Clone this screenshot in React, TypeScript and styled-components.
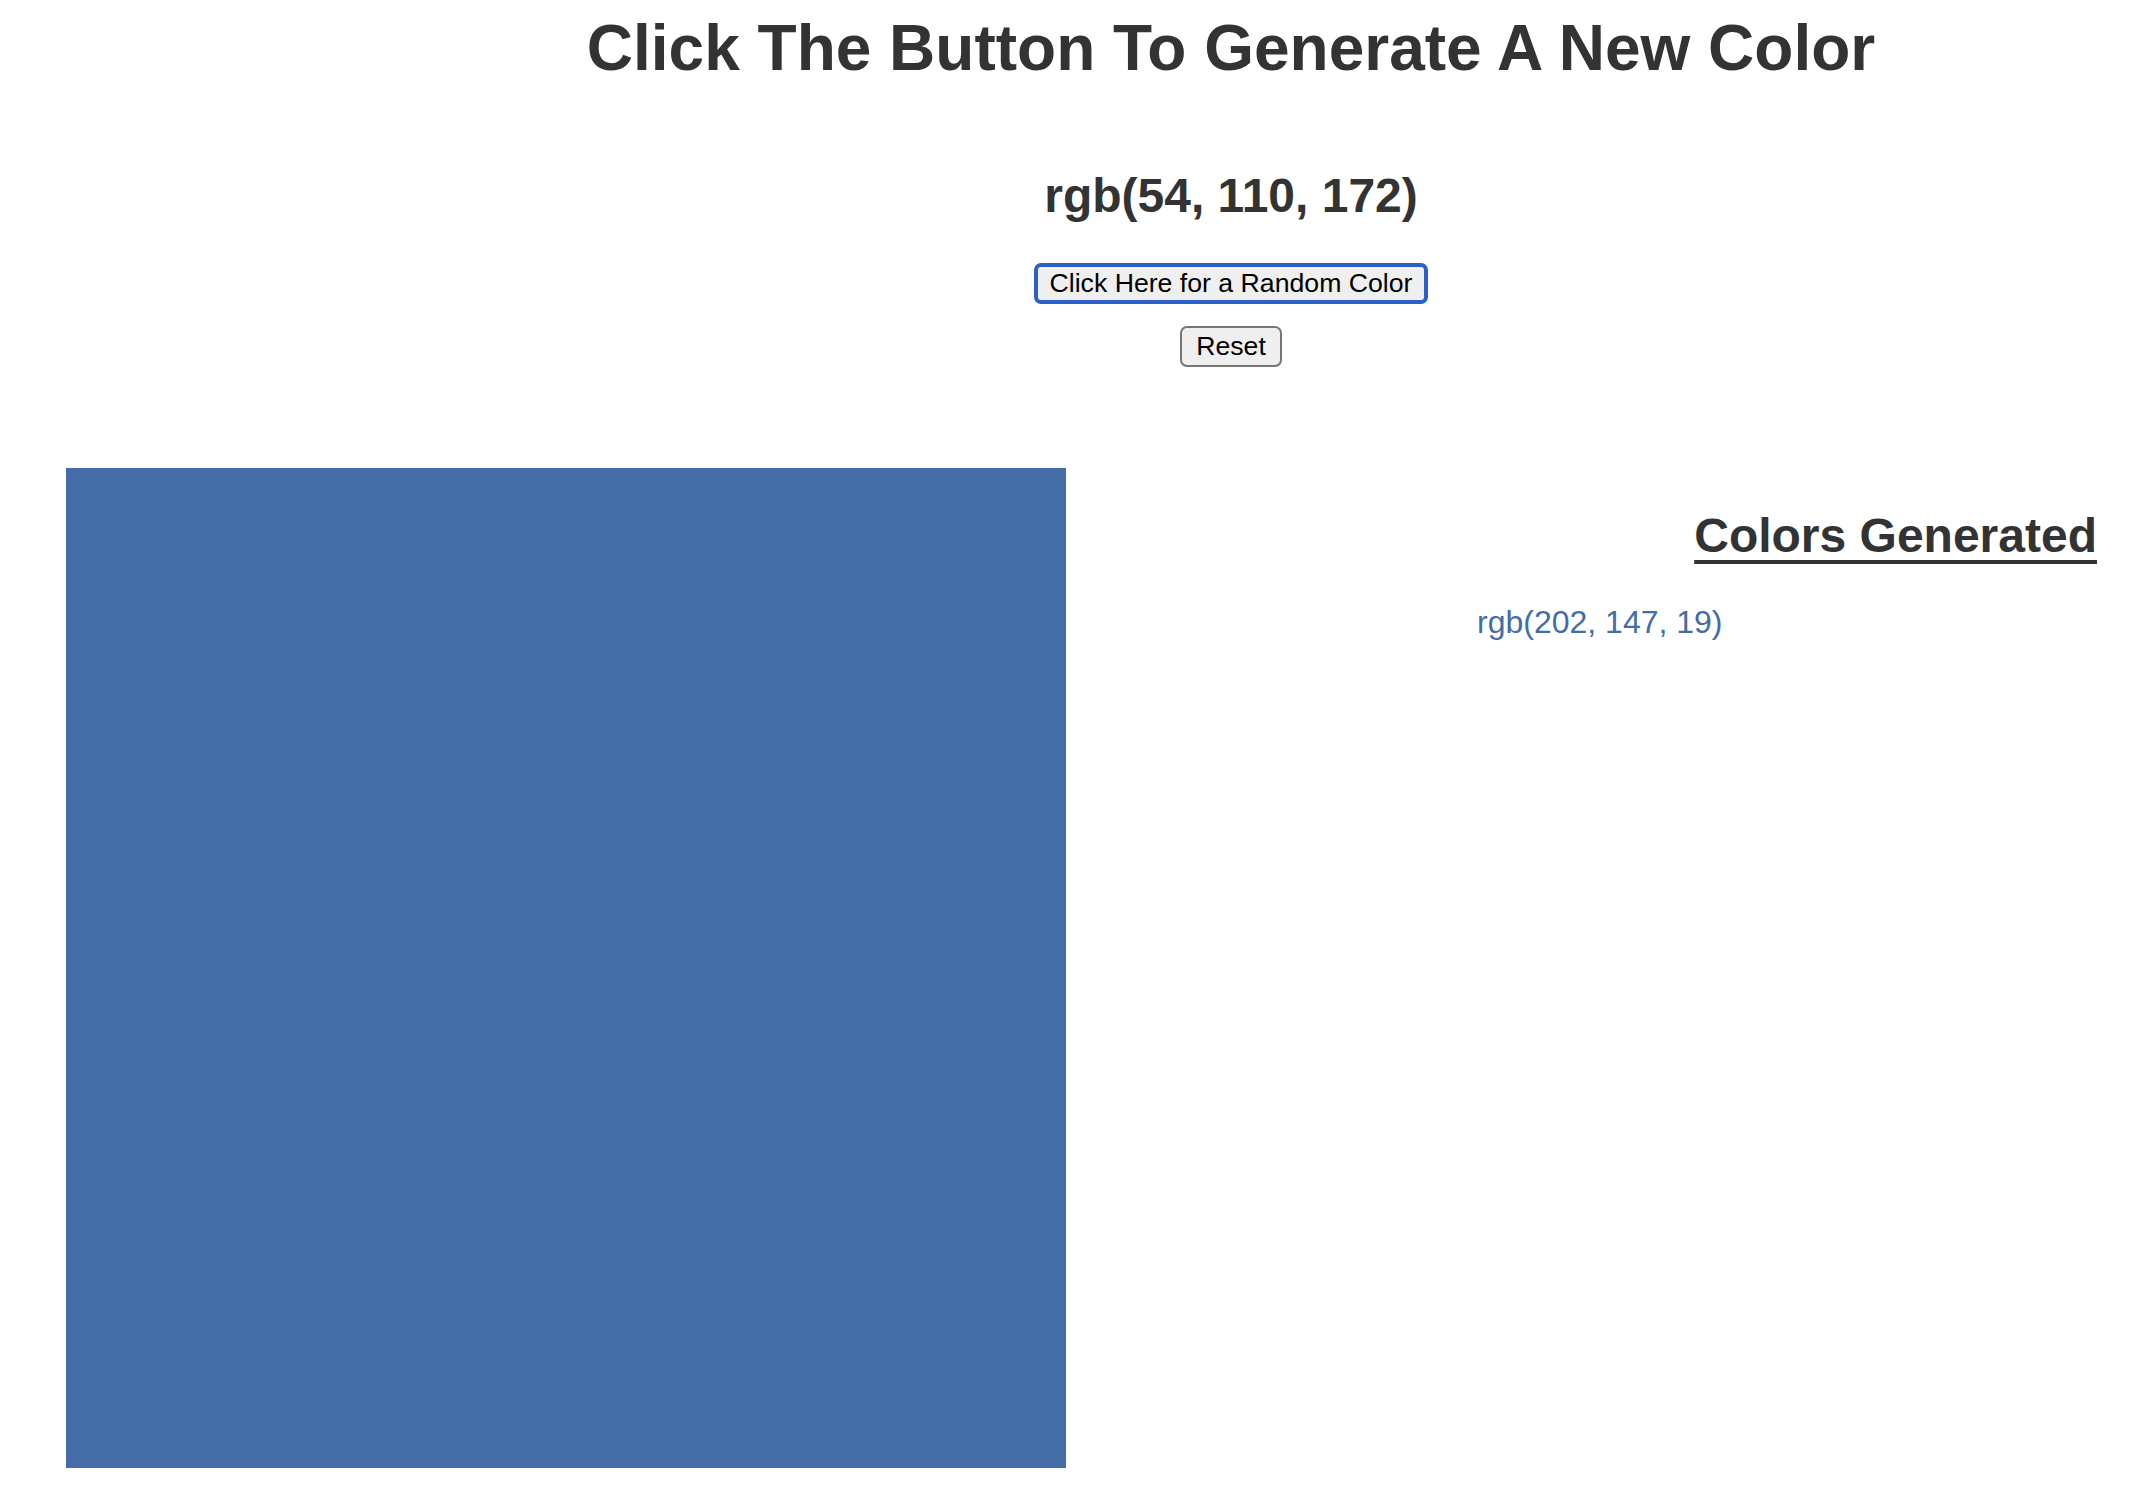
import React from "react";
import styled, { createGlobalStyle } from "styled-components";

const GlobalStyle = createGlobalStyle`
  html, body {
    margin: 0;
    padding: 0;
    background: #ffffff;
  }
  body {
    font-family: "Liberation Sans", Arial, Helvetica, sans-serif;
    color: #333333;
  }
`;

const SWATCH = "#446ca6";

const Page = styled.div`
  width: 2130px;
  display: flex;
  flex-direction: column;
`;

const Header = styled.header`
  display: flex;
  flex-direction: column;
  align-items: center;
  padding: 16px 0 0 332px;
`;

const Title = styled.h1`
  margin: 0;
  font-size: 64px;
  line-height: 64px;
  font-weight: 700;
  color: #333333;
  white-space: nowrap;
`;

const CurrentColor = styled.h2`
  margin: 92px 0 0;
  font-size: 48px;
  line-height: 48px;
  font-weight: 700;
  color: #333333;
`;

const Button = styled.button<{ $focused?: boolean }>`
  box-sizing: border-box;
  height: 41px;
  margin: ${(p) => (p.$focused ? "43px 0 0" : "22px 0 0")};
  padding: ${(p) => (p.$focused ? "0 12px" : "0 14px")};
  border: ${(p) => (p.$focused ? "4px solid #2c5fc8" : "2px solid #767676")};
  border-radius: 7px;
  background: #efefef;
  color: #000000;
  font-family: "Liberation Sans", Arial, Helvetica, sans-serif;
  font-size: 26.67px;
  line-height: 1;
  display: flex;
  align-items: center;
  justify-content: center;
  white-space: nowrap;
  outline: none;
  cursor: pointer;
`;

const Main = styled.main`
  display: flex;
  align-items: flex-start;
  margin-top: 101px;
  padding-left: 66px;
`;

const Swatch = styled.div<{ $color: string }>`
  flex: none;
  width: 1000px;
  height: 1000px;
  background: ${(p) => p.$color};
`;

const Side = styled.aside`
  flex: 1;
  display: flex;
  flex-direction: column;
  padding: 44px 33px 0 0;
`;

const SideTitle = styled.h2`
  align-self: flex-end;
  margin: 0;
  font-size: 48px;
  line-height: 48px;
  font-weight: 700;
  color: #333333;
  text-decoration: underline;
  text-decoration-thickness: 4px;
  text-underline-offset: 8px;
`;

const History = styled.ul`
  list-style: none;
  margin: 46px 0 0;
  padding: 0 0 0 411px;
`;

const HistoryItem = styled.li<{ $color: string }>`
  font-size: 32px;
  line-height: 32px;
  color: ${(p) => p.$color};
`;

export default function App() {
  const current = "rgb(54, 110, 172)";
  const history = ["rgb(202, 147, 19)"];
  return (
    <>
      <GlobalStyle />
      <Page>
        <Header>
          <Title>Click The Button To Generate A New Color</Title>
          <CurrentColor>{current}</CurrentColor>
          <Button $focused>Click Here for a Random Color</Button>
          <Button>Reset</Button>
        </Header>
        <Main>
          <Swatch $color={SWATCH} />
          <Side>
            <SideTitle>Colors Generated</SideTitle>
            <History>
              {history.map((c) => (
                <HistoryItem key={c} $color={SWATCH}>
                  {c}
                </HistoryItem>
              ))}
            </History>
          </Side>
        </Main>
      </Page>
    </>
  );
}
